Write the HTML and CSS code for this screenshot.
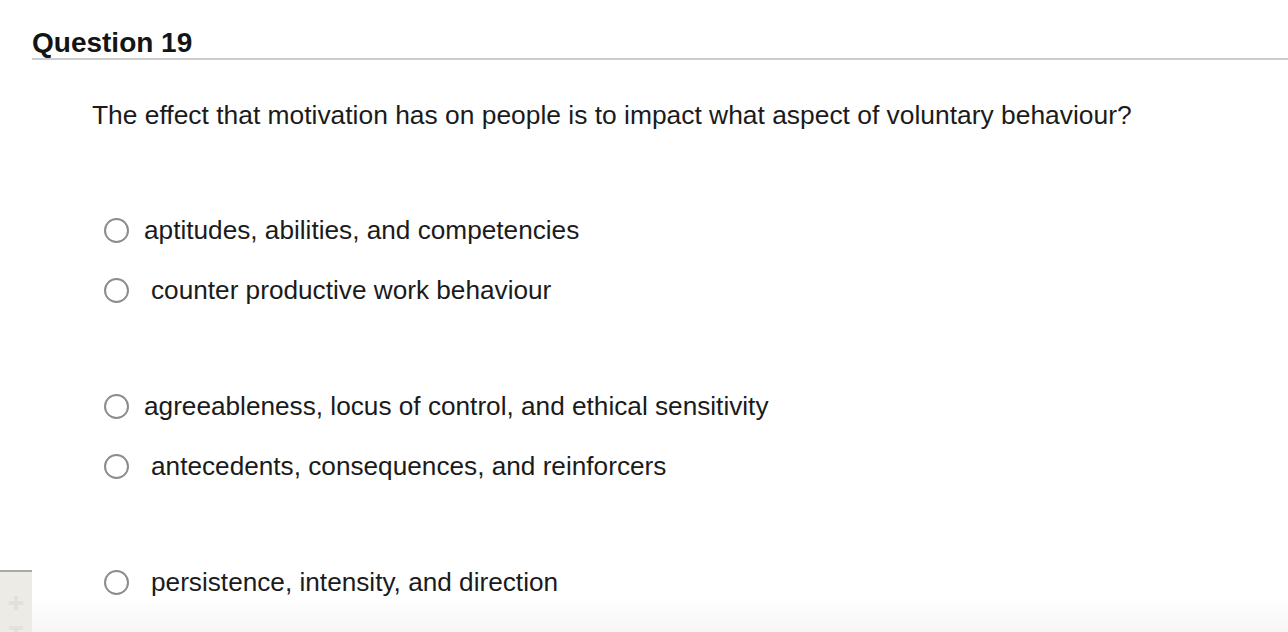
FILE: index.html
```html
<!DOCTYPE html>
<html lang="en">
<head>
<meta charset="utf-8">
<title>Question 19</title>
<link rel="stylesheet" href="styles.css">
</head>
<body>
<div class="question">
  <h2 class="q-title">Question 19</h2>
  <p class="q-text">The effect that motivation has on people is to impact what aspect of voluntary behaviour?</p>
  <ul class="options">
    <li class="option"><span class="radio"></span><span class="label">aptitudes, abilities, and competencies</span></li>
    <li class="option gap-after"><span class="radio"></span><span class="label indent">counter productive work behaviour</span></li>
    <li class="option"><span class="radio"></span><span class="label">agreeableness, locus of control, and ethical sensitivity</span></li>
    <li class="option gap-after"><span class="radio"></span><span class="label indent">antecedents, consequences, and reinforcers</span></li>
    <li class="option"><span class="radio"></span><span class="label indent">persistence, intensity, and direction</span></li>
  </ul>
</div>
<div class="bottom-fade"></div>
<div class="side-widget">
  <span class="plus p1"></span>
  <span class="plus p2"></span>
</div>
</body>
</html>
```
FILE: styles.css
```css
html, body {
  margin: 0;
  padding: 0;
  background: #ffffff;
  font-family: "Liberation Sans", Arial, Helvetica, sans-serif;
  color: #1b1b1b;
  overflow: hidden;
}

.question {
  padding-left: 32px;
}

.q-title {
  margin: 28px 0 0 0;
  font-size: 28px;
  line-height: 30px;
  font-weight: bold;
  color: #141414;
  border-bottom: 2px solid #cccccc;
}

.q-text {
  margin: 40px 0 0 60px;
  font-size: 26.4px;
  line-height: 30px;
}

.options {
  list-style: none;
  margin: 85px 0 0 72px;
  padding: 0;
  display: flex;
  flex-direction: column;
  gap: 30px;
}

.option {
  display: flex;
  align-items: center;
  gap: 15px;
  height: 30px;
  font-size: 26.2px;
  line-height: 30px;
}

.option.gap-after {
  margin-bottom: 56px;
}

.radio {
  box-sizing: border-box;
  width: 25px;
  height: 25px;
  border: 2px solid #8c8c8c;
  border-radius: 50%;
  background: #fff;
  flex: none;
}

.label.indent {
  padding-left: 7px;
}

.bottom-fade {
  position: fixed;
  left: 0;
  right: 0;
  bottom: 0;
  height: 34px;
  background: linear-gradient(to bottom, rgba(255,255,255,0), #f6f6f6);
  pointer-events: none;
}

.side-widget {
  position: fixed;
  left: 0;
  bottom: 0;
  width: 32px;
  height: 60px;
  background: #ecebe5;
  border-top: 2px solid #a9a9a9;
}

.plus {
  position: absolute;
  left: 9px;
  width: 14px;
  height: 14px;
  background:
    linear-gradient(#e2e0d8, #e2e0d8) center / 14px 4px no-repeat,
    linear-gradient(#e2e0d8, #e2e0d8) center / 4px 14px no-repeat;
}

.p1 { top: 24px; }
.p2 { top: 54px; height: 6px; background-position: center top, center top; }
```
